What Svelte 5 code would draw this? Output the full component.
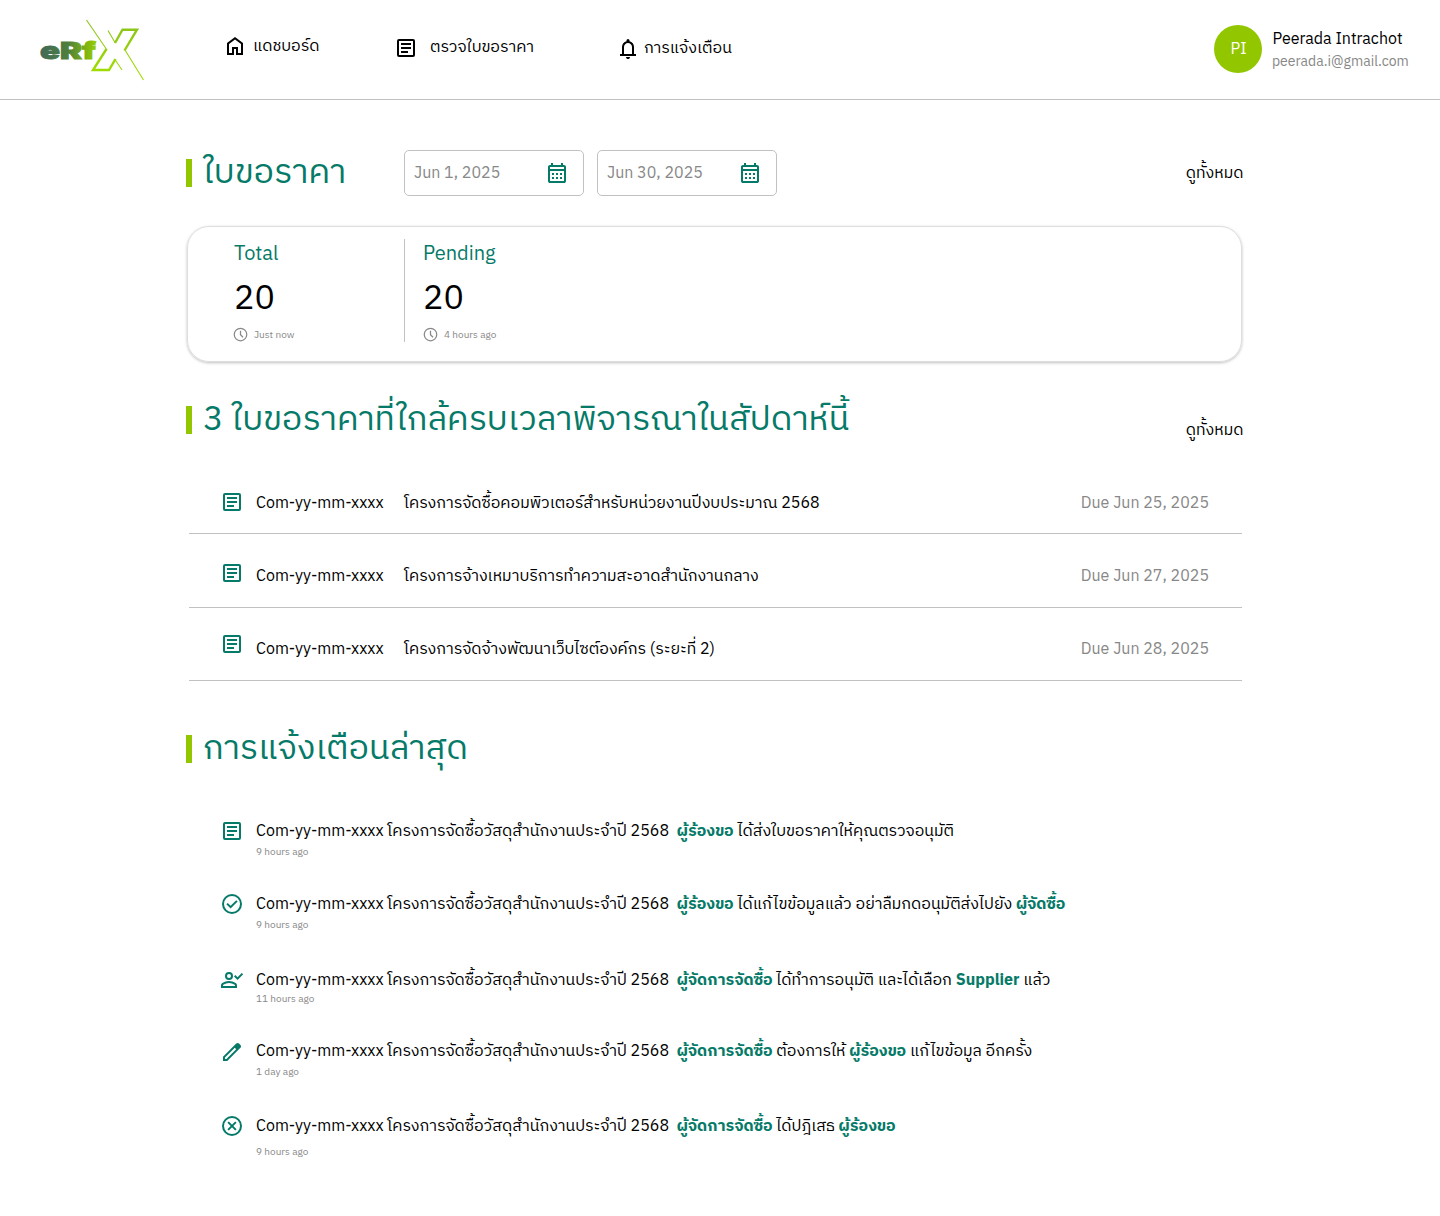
<script>
  const due = [
    { title: 'โครงการจัดซื้อคอมพิวเตอร์สำหรับหน่วยงานปีงบประมาณ 2568', date: 'Due Jun 25, 2025' },
    { title: 'โครงการจ้างเหมาบริการทำความสะอาดสำนักงานกลาง', date: 'Due Jun 27, 2025' },
    { title: 'โครงการจัดจ้างพัฒนาเว็บไซต์องค์กร (ระยะที่ 2)', date: 'Due Jun 28, 2025' }
  ];
  const project = 'โครงการจัดซื้อวัสดุสำนักงานประจำปี 2568';
  const asker = { b: true, t: 'ผู้ร้องขอ' };
  const manager = { b: true, t: 'ผู้จัดการจัดซื้อ' };
  const notes = [
    { icon: 'article', time: '9 hours ago', parts: [asker, { t: 'ได้ส่งใบขอราคาให้คุณตรวจอนุมัติ' }] },
    { icon: 'check', time: '9 hours ago', parts: [asker, { t: 'ได้แก้ไขข้อมูลแล้ว อย่าลืมกดอนุมัติส่งไปยัง' }, { b: true, t: 'ผู้จัดซื้อ' }] },
    { icon: 'person', time: '11 hours ago', parts: [manager, { t: 'ได้ทำการอนุมัติ และได้เลือก' }, { b: true, t: 'Supplier' }, { t: 'แล้ว' }] },
    { icon: 'edit', time: '1 day ago', parts: [manager, { t: 'ต้องการให้' }, asker, { t: 'แก้ไขข้อมูล อีกครั้ง' }] },
    { icon: 'cancel', time: '9 hours ago', parts: [manager, { t: 'ได้ปฎิเสธ' }, asker] }
  ];
</script>

{#snippet icon(name)}
  <svg class="icon" viewBox="0 0 24 24" fill="currentColor">
    {#if name === 'home'}
      <path d="M6 19h3v-6h6v6h3v-9l-6-4.5L6 10v9Zm-2 2V9l8-6 8 6v12h-7v-6h-2v6H4Z" />
    {:else if name === 'article'}
      <rect x="4" y="4" width="16" height="16" rx="1" fill="none" stroke="currentColor" stroke-width="2" />
      <path d="M7 7h10v2H7zM7 11h10v2H7zM7 15h7v2H7z" />
    {:else if name === 'bell'}
      <path d="M4 19v-2h2v-7q0-2.075 1.25-3.687T10.5 4.2v-.7q0-.625.438-1.062T12 2q.625 0 1.063.438T13.5 3.5v.7q2 .5 3.25 2.113T18 10v7h2v2H4Zm8 3q-.825 0-1.412-.587T10 20h4q0 .825-.587 1.413T12 22Zm-4-5h8v-7q0-1.65-1.175-2.825T12 6q-1.65 0-2.825 1.175T8 10v7Z" />
    {:else if name === 'calendar'}
      <path d="M5 22q-.825 0-1.413-.587T3 20V6q0-.825.588-1.413T5 4h1V2h2v2h8V2h2v2h1q.825 0 1.413.588T21 6v14q0 .825-.587 1.413T19 22H5Zm0-2h14V10H5v10Zm0-12h14V6H5v2Z" />
      <path d="M7 12h2v2H7zM11 12h2v2h-2zM15 12h2v2h-2zM7 16h2v2H7zM11 16h2v2h-2zM15 16h2v2h-2z" />
    {:else if name === 'check'}
      <circle cx="12" cy="12" r="9" fill="none" stroke="currentColor" stroke-width="2" />
      <path d="m10.6 16.6 7.05-7.05-1.4-1.4-5.65 5.65-2.85-2.85-1.4 1.4 4.25 4.25Z" />
    {:else if name === 'person'}
      <g fill="none" stroke="currentColor" stroke-width="2">
        <circle cx="9" cy="8" r="3" />
        <path d="M2 19v-1.8q0-.9.8-1.4Q5.6 14 9 14t6.2 1.8q.8.5.8 1.4V19Z" />
      </g>
      <path d="m17.55 12-3.55-3.55 1.4-1.4 2.125 2.125 4.25-4.25 1.4 1.425L17.55 12Z" />
    {:else if name === 'edit'}
      <path d="M5 19h1.425L16.2 9.225 14.775 7.8 5 17.575V19Zm-2 2v-4.25L16.2 3.575q.3-.275.663-.425t.762-.15q.4 0 .775.15t.65.45L20.425 5q.3.275.438.65T21 6.4q0 .4-.137.763t-.438.662L7.25 21H3Z" />
    {:else if name === 'cancel'}
      <circle cx="12" cy="12" r="9" fill="none" stroke="currentColor" stroke-width="2" />
      <path d="m8.1 8.1 7.8 7.8m0-7.8-7.8 7.8" stroke="currentColor" stroke-width="2" />
    {:else if name === 'clock'}
      <circle cx="12" cy="12" r="10" fill="none" stroke="currentColor" stroke-width="2" />
      <path d="M12 6v6.5l4 4" fill="none" stroke="currentColor" stroke-width="2" />
    {/if}
  </svg>
{/snippet}

<header>
  <svg class="logo" viewBox="0 0 112 68">
    <defs>
      <linearGradient id="word"><stop offset="0" stop-color="#41695a" /><stop offset=".5" stop-color="#4f7f3c" /><stop offset="1" stop-color="#96cf00" /></linearGradient>
      <linearGradient id="cross" gradientUnits="userSpaceOnUse" x1="0" y1="10" x2="0" y2="56"><stop offset="0" stop-color="#8cc41c" /><stop offset="1" stop-color="#a0dc00" /></linearGradient>
    </defs>
    <text x="4" y="42.5" class="word" fill="url(#word)" stroke="url(#word)" textLength="56" lengthAdjust="spacingAndGlyphs">eRf</text>
    <g fill="none" stroke="url(#cross)">
      <path d="M50.5 4 71 34M72 14.5 79 26.5M79 43.5 86 54M89 34 107.5 64" stroke-width="1.1" />
      <path d="M70.5 33 57 54H73L79.5 43M79 27 86.5 13.7H101L88.5 34.5" stroke-width="2.4" />
    </g>
  </svg>
  <nav>
    <a class="n1" href="#home">{@render icon('home')}<span>แดชบอร์ด</span></a>
    <a class="n2" href="#quotes">{@render icon('article')}<span>ตรวจใบขอราคา</span></a>
    <a class="n3" href="#alerts">{@render icon('bell')}<span>การแจ้งเตือน</span></a>
  </nav>
  <div class="user">
    <div class="avatar"><span>PI</span></div>
    <div class="who">
      <div class="name">Peerada Intrachot</div>
      <div class="mail">peerada.i@gmail.com</div>
    </div>
  </div>
</header>

<main>
  <section class="head first">
    <h2>ใบขอราคา</h2>
    <div class="date d1"><span>Jun 1, 2025</span>{@render icon('calendar')}</div>
    <div class="date"><span>Jun 30, 2025</span>{@render icon('calendar')}</div>
    <a class="all" href="#all">ดูทั้งหมด</a>
  </section>

  <section class="card">
    <div class="stat total">
      <div class="label">Total</div>
      <div class="num">20</div>
      <div class="ago">{@render icon('clock')}<span>Just now</span></div>
    </div>
    <div class="stat pending">
      <div class="label">Pending</div>
      <div class="num">20</div>
      <div class="ago">{@render icon('clock')}<span>4 hours ago</span></div>
    </div>
  </section>

  <section class="head second">
    <h2>3 ใบขอราคาที่ใกล้ครบเวลาพิจารณาในสัปดาห์นี้</h2>
    <a class="all" href="#due">ดูทั้งหมด</a>
  </section>

  <ul class="due">
    {#each due as d}
      <li>
        {@render icon('article')}
        <div class="code">Com-yy-mm-xxxx</div>
        <div class="title">{d.title}</div>
        <div class="when">{d.date}</div>
      </li>
    {/each}
  </ul>

  <section class="head third">
    <h2>การแจ้งเตือนล่าสุด</h2>
  </section>

  <ul class="notes">
    {#each notes as n}
      <li class={n.icon}>
        {@render icon(n.icon)}
        <div class="body">
          <div class="line">
            Com-yy-mm-xxxx <span class="project">{project}</span>
            {#each n.parts as p}
              <span class:b={p.b}>{p.t}</span>{' '}
            {/each}
          </div>
          <div class="time">{n.time}</div>
        </div>
      </li>
    {/each}
  </ul>
</main>

<style>
  :global(body) {
    background: #fff;
    color: #000;
    font: 16px/24px 'IBM Plex Sans Thai', 'Noto Sans', 'Noto Sans Thai', sans-serif;
    white-space: nowrap;
  }
  a { color: inherit; text-decoration: none; }
  ul { list-style: none; margin: 0; padding: 0; }
  .icon { width: 24px; height: 24px; flex: none; display: block; }
  header { display: flex; height: 99px; border-bottom: 1px solid #c1c1c1; }
  .logo { width: 112px; height: 68px; margin: 16px 0 0 36px; flex: none; }
  .word { font: 900 23.5px Inter, sans-serif; stroke-width: .9px; }
  nav { display: flex; margin-left: 75px; flex: 1; }
  nav a { display: flex; align-items: center; height: 24px; }
  .n1 { margin-top: 34px; width: 171px; gap: 6px; }
  .n1 span { padding-top: 2px; }
  .n2 { margin-top: 36px; width: 222px; gap: 12px; }
  .n3 { margin-top: 37px; gap: 4px; }
  .user { display: flex; gap: 10px; width: 226px; flex: none; padding-top: 25px; }
  .avatar { width: 48px; height: 48px; border-radius: 50%; background: #92c700; color: #fff; display: grid; place-items: center; }
  .avatar span { padding: 2px 0 0 1px; }
  .who { padding-top: 3px; }
  .name { padding-left: .5px; }
  .mail { font-size: 14px; line-height: 20px; color: #888; }
  main { padding: 50px 0 0 186px; width: 1057.5px; }
  .head { display: flex; align-items: center; height: 46px; }
  h2 { display: flex; align-items: center; gap: 11px; margin: 0; font-size: 34px; font-weight: 400; line-height: 46px; color: #067a68; }
  h2::before { content: ''; width: 6px; height: 28px; background: #92c700; }
  .first h2 { width: 218px; }
  .all { margin-left: auto; padding-top: 2px; }
  .date { box-sizing: border-box; width: 180px; height: 46px; border: 1px solid #c1c1c1; border-radius: 5px; display: flex; align-items: center; justify-content: space-between; padding: 0 14px 0 9px; color: #888; }
  .date span { padding-top: 2px; }
  .d1 { margin-right: 13px; }
  .date .icon { color: #067a68; }
  .card { display: flex; box-sizing: border-box; width: 1055px; height: 136px; margin: 30px 0 0 1px; padding: 12px 0 0 46px; border: 1px solid #dedede; border-radius: 22px; box-shadow: 0 1px 3px rgba(0, 0, 0, .25); }
  .stat { height: 103px; }
  .total { width: 170px; border-right: 1px solid #c1c1c1; }
  .pending { padding-left: 18px; }
  .label { font-size: 20px; line-height: 28px; padding-top: 2px; color: #067a68; }
  .num { font-size: 34px; line-height: 60px; }
  .ago { display: flex; align-items: center; gap: 6px; height: 16px; margin-top: -2px; font-size: 10px; color: #888; }
  .ago .icon { width: 15px; height: 15px; margin: -1px 0 0 -1px; }
  .pending .ago { padding-left: 1px; }
  .second { margin-top: 35px; }
  .second .all { padding-top: 22px; }
  .due { width: 1053px; margin: 17px 0 0 3px; }
  .due li { display: flex; box-sizing: border-box; height: 74px; padding: 32px 33px 0 31px; border-bottom: 1px solid #c1c1c1; }
  .due .icon { margin-top: -2px; }
  .due li:nth-child(2) { padding-top: 31px; }
  .due li:nth-child(2) .icon { margin-top: -4px; }
  .due li:nth-child(3) { padding-top: 30px; height: 73px; }
  .due li:nth-child(3) .icon { margin-top: -6px; }
  .code { width: 148px; margin-left: 12px; }
  .when { margin-left: auto; color: #888; }
  .third { margin-top: 45px; }
  .notes { padding: 47px 0 0 34px; }
  .notes li { display: flex; gap: 12px; height: 73px; }
  .notes .icon, .due .icon { color: #067a68; }
  .body { padding-top: 1px; }
  .project { margin-right: 4px; }
  .b { color: #067a68; font-weight: 700; }
  .time { font-size: 10px; line-height: 18px; margin-top: -1px; color: #888; }
  .notes .check { height: 76px; }
  .notes .person { height: 72px; }
  .person .time { margin-top: -3px; }
  .notes .edit { height: 74px; }
  .edit .body { padding-top: 0; }
  .cancel .time { margin-top: 4px; }
</style>
